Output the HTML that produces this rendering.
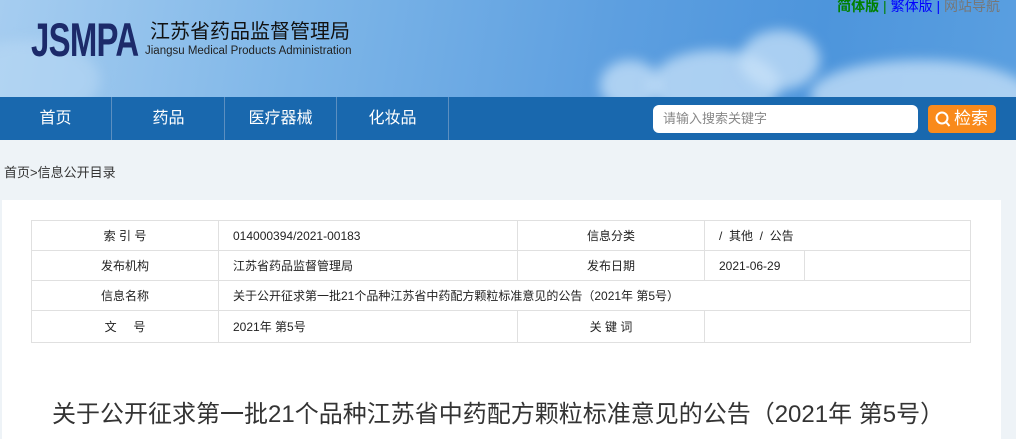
<!DOCTYPE html><html><head><meta charset="utf-8"><style>
*{margin:0;padding:0;box-sizing:border-box}
body{width:1016px;height:439px;overflow:hidden;background:#eef3f7;font-family:"Liberation Sans","Noto Sans CJK SC",sans-serif;position:relative}
.hdr{position:absolute;left:0;top:0;width:1016px;height:97px;background:linear-gradient(100deg,#a6cdf0 0%,#7eb6e8 30%,#5d9fe0 60%,#4d95dc 80%,#5a9fe0 100%);overflow:hidden}
.cl{position:absolute;border-radius:50%;background:rgba(200,225,248,.75);filter:blur(6px)}
.logo{position:absolute;left:31px;top:16px;font:bold 47px/1 "Liberation Sans",sans-serif;color:#1c2a6a;transform:scaleX(.7);transform-origin:left;letter-spacing:-1px}
.cn{position:absolute;left:150px;top:20px;font-size:20px;line-height:24px;color:#111}
.en{position:absolute;left:145px;top:44px;font-size:11.5px;line-height:14px;color:#222}
.top{position:absolute;right:16px;top:-4px;font-size:14px}
.nav{position:absolute;left:0;top:97px;width:1016px;height:43px;background:#1968ae}
.nav div{position:absolute;top:0;height:43px;line-height:43px;color:#fff;font-size:16px;text-align:center;width:112px;border-right:1px solid #5c8fc0}
.srch{position:absolute;left:653px;top:105px;width:265px;height:28px;background:#fff;border-radius:6px;font-size:13px;color:#888;line-height:28px;padding-left:10px}
.btn{position:absolute;left:928px;top:105px;width:68px;height:28px;background:#f98a1b;border-radius:4px;color:#fff;font-size:17px;line-height:28px;padding-left:26px}
.bc{position:absolute;left:4px;top:162px;font-size:13px;color:#333}
.main{position:absolute;left:2px;top:200px;width:999px;height:239px;background:#fff}
table{position:absolute;left:31px;top:220px;border-collapse:collapse;font-size:12px;color:#222}
td{border:1px solid #e0e0e0;height:30px;padding:0}
.c{text-align:center}
.v{padding-left:14px}
h1{position:absolute;left:52px;top:394px;font-size:24px;font-weight:normal;color:#333;white-space:nowrap}
</style></head><body>
<div class="hdr">
<div class="cl" style="left:650px;top:50px;width:130px;height:70px"></div>
<div class="cl" style="left:740px;top:30px;width:80px;height:60px"></div>
<div class="cl" style="left:810px;top:60px;width:220px;height:70px"></div>
<div class="cl" style="left:600px;top:60px;width:60px;height:50px"></div>
<div class="cl" style="left:-40px;top:40px;width:140px;height:80px;background:rgba(190,220,245,.5)"></div>
<div class="logo">JSMPA</div>
<div class="cn">江苏省药品监督管理局</div>
<div class="en">Jiangsu Medical Products Administration</div>
<div class="top"><span style="color:#008000;font-weight:bold">简体版</span> <span style="color:#008000">|</span> <span style="color:#00f">繁体版</span> <span style="color:#00f">|</span> <span style="color:#777">网站导航</span></div>
</div>
<div class="nav">
<div style="left:0">首页</div><div style="left:113px">药品</div><div style="left:225px">医疗器械</div><div style="left:337px">化妆品</div>
</div>
<div class="srch">请输入搜索关键字</div>
<div class="btn"><svg style="position:absolute;left:7px;top:6px" width="16" height="17" viewBox="0 0 16 17"><circle cx="7" cy="7" r="5.5" fill="none" stroke="#fff" stroke-width="2"/><path d="M11 11l3.5 4" stroke="#fff" stroke-width="2"/></svg>检索</div>
<div class="bc">首页&gt;信息公开目录</div>
<div class="main"></div>
<table>
<tr><td class="c" style="width:187px">索 引 号</td><td class="v" style="width:299px">014000394/2021-00183</td><td class="c" style="width:187px">信息分类</td><td class="v" colspan="2" style="width:266px">/ &nbsp;其他 &nbsp;/ &nbsp;公告</td></tr>
<tr><td class="c">发布机构</td><td class="v">江苏省药品监督管理局</td><td class="c">发布日期</td><td class="v" style="width:100px">2021-06-29</td><td></td></tr>
<tr><td class="c">信息名称</td><td class="v" colspan="4">关于公开征求第一批21个品种江苏省中药配方颗粒标准意见的公告（2021年 第5号）</td></tr>
<tr><td class="c" style="height:32px">文 &nbsp; &nbsp; 号</td><td class="v">2021年 第5号</td><td class="c">关 键 词</td><td colspan="2"></td></tr>
</table>
<h1>关于公开征求第一批21个品种江苏省中药配方颗粒标准意见的公告（2021年 第5号）</h1>
</body></html>
